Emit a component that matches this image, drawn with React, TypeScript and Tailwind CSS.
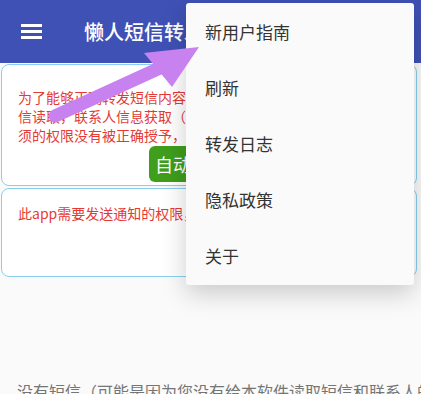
import React from 'react'

const menuItems = ['新用户指南', '刷新', '转发日志', '隐私政策', '关于']

export default function App() {
  return (
    <div
      className="relative h-[394px] w-[421px] overflow-hidden bg-[#fafafa]"
      style={{ fontFamily: '"Noto Sans CJK SC", "Noto Sans", sans-serif' }}
    >
      <header className="flex h-[63px] items-center bg-[#3f51b5] pl-[21px]">
        <div className="flex w-[21px] flex-col gap-[3.5px]">
          <span className="h-[2.5px] bg-white" />
          <span className="h-[2.5px] bg-white" />
          <span className="h-[2.5px] bg-white" />
        </div>
        <h1 className="ml-[42px] text-[20px] font-medium leading-none text-white">懒人短信转发</h1>
      </header>

      <div className="ml-[1px] mr-[4px] mt-[1px] h-[122px] rounded-[8px] border-[1.5px] border-[#8ad0ee] bg-white pl-[16px] pt-[23px]">
        <div className="whitespace-nowrap text-[14px] leading-[19px] text-[#e53935]">
          <p>为了能够正确转发短信内容，本软件需要短</p>
          <p>信读取，联系人信息获取（为了显示联系人名称）</p>
          <p>须的权限没有被正确授予，请点击下方按钮</p>
        </div>
        <div className="mt-[1px] flex justify-center pr-[16px]">
          <button className="h-[36px] w-[120px] rounded-[6px] bg-[#3f9e1c] px-[6px] text-left text-[18px] text-white">
            自动授予权限
          </button>
        </div>
      </div>

      <div className="ml-[1px] mr-[4px] mt-[2px] h-[89px] rounded-[8px] border-[1.5px] border-[#8ad0ee] bg-white pl-[16px] pt-[14px]">
        <p className="whitespace-nowrap text-[14px] leading-[20px] text-[#e53935]">
          此app需要发送通知的权限，请点击授予
        </p>
      </div>

      <p className="mt-[104px] whitespace-nowrap pl-[17px] text-[16px] leading-[20px] text-[#757575]">
        没有短信（可能是因为您没有给本软件读取短信和联系人的权限）
      </p>

      <div className="absolute left-[186px] top-[3px] w-[228px] rounded-[3px] bg-[#fafafa] py-[1px] shadow-[0_8px_26px_rgba(0,0,0,0.2)]">
        {menuItems.map((item) => (
          <div key={item} className="flex h-[56px] items-center pl-[19px] text-[17px] text-[#333333]">
            {item}
          </div>
        ))}
      </div>

      <svg className="absolute left-0 top-0" width="421" height="140" viewBox="0 0 421 140">
        <line x1="55" y1="116" x2="162" y2="67" stroke="#c882f0" strokeWidth="13" strokeLinecap="round" />
        <polygon points="199,47 144,53 172,87" fill="#c882f0" />
      </svg>
    </div>
  )
}
